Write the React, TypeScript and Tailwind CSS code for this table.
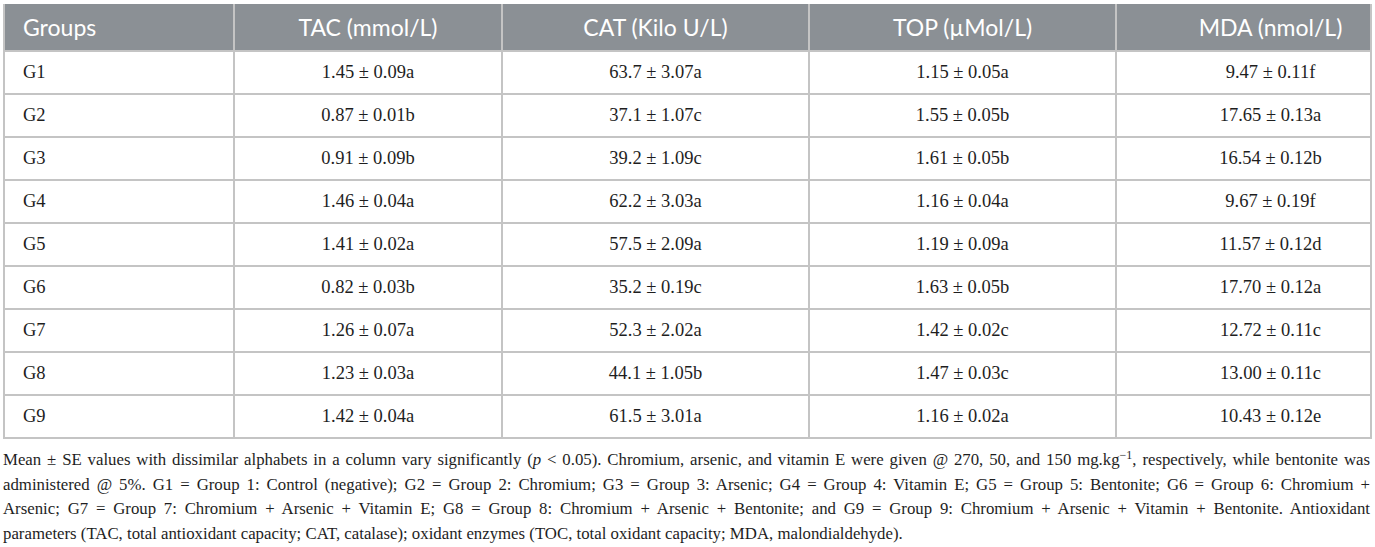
import React from 'react';

const rows = [
  ['G1', '1.45 ± 0.09a', '63.7 ± 3.07a', '1.15 ± 0.05a', '9.47 ± 0.11f'],
  ['G2', '0.87 ± 0.01b', '37.1 ± 1.07c', '1.55 ± 0.05b', '17.65 ± 0.13a'],
  ['G3', '0.91 ± 0.09b', '39.2 ± 1.09c', '1.61 ± 0.05b', '16.54 ± 0.12b'],
  ['G4', '1.46 ± 0.04a', '62.2 ± 3.03a', '1.16 ± 0.04a', '9.67 ± 0.19f'],
  ['G5', '1.41 ± 0.02a', '57.5 ± 2.09a', '1.19 ± 0.09a', '11.57 ± 0.12d'],
  ['G6', '0.82 ± 0.03b', '35.2 ± 0.19c', '1.63 ± 0.05b', '17.70 ± 0.12a'],
  ['G7', '1.26 ± 0.07a', '52.3 ± 2.02a', '1.42 ± 0.02c', '12.72 ± 0.11c'],
  ['G8', '1.23 ± 0.03a', '44.1 ± 1.05b', '1.47 ± 0.03c', '13.00 ± 0.11c'],
  ['G9', '1.42 ± 0.04a', '61.5 ± 3.01a', '1.16 ± 0.02a', '10.43 ± 0.12e'],
];

const serif = "font-['Liberation_Serif','Times_New_Roman',serif]";

export default function App() {
  return (
    <div className="min-h-screen bg-white pt-[4px] pl-[3px]">
      <div className="w-[1367px]">
        <table className="w-full table-fixed border-collapse">
          <colgroup>
            <col className="w-[230px]" />
            <col className="w-[268px]" />
            <col className="w-[307px]" />
            <col className="w-[307px]" />
            <col className="w-[255px]" />
          </colgroup>
          <thead>
            <tr className="bg-[#8b9095] text-white font-['Lato','Open_Sans',sans-serif] text-[23px] leading-none">
              <th className="h-[47px] border-2 border-[#c4c4c4] border-t-0 pl-[18px] text-left font-normal">Groups</th>
              <th className="border-2 border-[#c4c4c4] border-t-0 text-center font-normal">TAC (mmol/L)</th>
              <th className="border-2 border-[#c4c4c4] border-t-0 text-center font-normal">CAT (Kilo U/L)</th>
              <th className="border-2 border-[#c4c4c4] border-t-0 text-center font-normal">TOP (µMol/L)</th>
              <th className="border-2 border-[#c4c4c4] border-t-0 pl-[54px] text-center font-normal">MDA (nmol/L)</th>
            </tr>
          </thead>
          <tbody className={`${serif} text-[18.5px] text-[#1e1e1e]`}>
            {rows.map((r) => (
              <tr key={r[0]}>
                <td className="h-[43px] border-2 border-[#c4c4c4] pl-[18px] text-left">{r[0]}</td>
                <td className="border-2 border-[#c4c4c4] text-center">{r[1]}</td>
                <td className="border-2 border-[#c4c4c4] text-center">{r[2]}</td>
                <td className="border-2 border-[#c4c4c4] text-center">{r[3]}</td>
                <td className="border-2 border-[#c4c4c4] pl-[54px] text-center">{r[4]}</td>
              </tr>
            ))}
          </tbody>
        </table>

        {/* footnote */}
        <div className={`${serif} mt-[9px] text-[16.8px] leading-[24.5px] text-[#1e1e1e]`}>
          <div className="text-justify [text-align-last:justify]">
            Mean ± SE values with dissimilar alphabets in a column vary significantly (<i>p</i> &lt; 0.05). Chromium, arsenic, and vitamin E were given @ 270, 50, and 150 mg.kg<sup className="text-[12px] leading-none">−1</sup>, respectively, while bentonite was
          </div>
          <div className="text-justify [text-align-last:justify]">
            administered @ 5%. G1 = Group 1: Control (negative); G2 = Group 2: Chromium; G3 = Group 3: Arsenic; G4 = Group 4: Vitamin E; G5 = Group 5: Bentonite; G6 = Group 6: Chromium +
          </div>
          <div className="text-justify [text-align-last:justify]">
            Arsenic; G7 = Group 7: Chromium + Arsenic + Vitamin E; G8 = Group 8: Chromium + Arsenic + Bentonite; and G9 = Group 9: Chromium + Arsenic + Vitamin + Bentonite. Antioxidant
          </div>
          <div>
            parameters (TAC, total antioxidant capacity; CAT, catalase); oxidant enzymes (TOC, total oxidant capacity; MDA, malondialdehyde).
          </div>
        </div>
      </div>
    </div>
  );
}
